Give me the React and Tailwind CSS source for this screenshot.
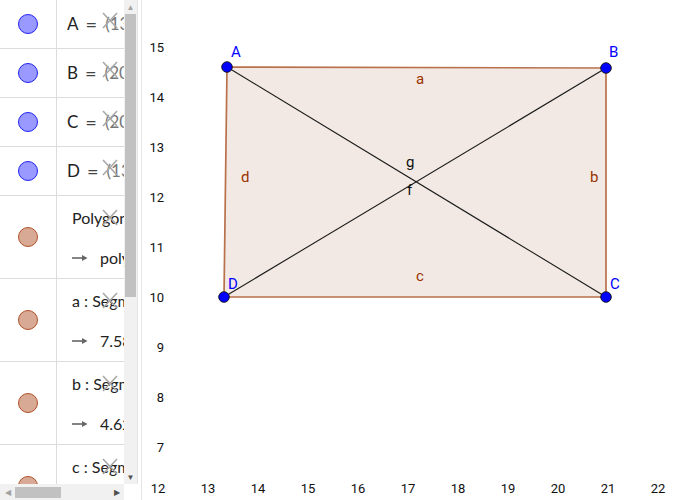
import React from "react";

// Algebra view entries: points first, then the polygon and its segments
const POINTS = [
  { name: "A", value: "(13.38, 14.62)" },
  { name: "B", value: "(20.96, 14.6)" },
  { name: "C", value: "(20.96, 10)" },
  { name: "D", value: "(13.32, 10)" },
];

const OBJECTS = [
  { head: "Polygon(A, B, C, D)", out: "poly1 = 34.95" },
  { head: "a : Segment(A, B)", out: "7.58" },
  { head: "b : Segment(B, C)", out: "4.62" },
  { head: "c : Segment(C, D)", out: "7.64" },
];

const A = [227, 67];
const B = [606, 68];
const C = [606, 297];
const D = [224, 297];

function Cross({ className }) {
  return (
    <svg className={className} width="16" height="17" viewBox="0 0 16 17">
      <path d="M1 1 L15 16 M15 1 L1 16" stroke="#a8a8a8" strokeWidth="1.6" />
    </svg>
  );
}

function Dot({ blue }) {
  return (
    <div
      className={
        blue
          ? "h-[20px] w-[20px] rounded-full border border-[#2222ee] bg-[#9999ff]"
          : "h-[20px] w-[20px] rounded-full border border-[#b0502a] bg-[#d8aa96]"
      }
    />
  );
}

function PointRow({ p }) {
  return (
    <div className="relative flex h-[49px] border-b border-[#dcdcdc]">
      <div className="flex w-[57px] shrink-0 items-center justify-center border-r border-[#dcdcdc]">
        <Dot blue />
      </div>
      <div className="flex items-center whitespace-nowrap pl-[10px] text-[17px] text-[#222]">
        {p.name}
        <span className="ml-[7px] text-[20px] leading-none text-[#444]">=</span>
        <span className="ml-[8px] text-[#777]">{p.value}</span>
      </div>
      <Cross className="absolute left-[102px] top-[12px]" />
    </div>
  );
}

function ObjectRow({ o }) {
  return (
    <div className="relative flex h-[83px] border-b border-[#dcdcdc]">
      <div className="flex w-[57px] shrink-0 items-center justify-center border-r border-[#dcdcdc]">
        <Dot />
      </div>
      <div className="flex flex-col justify-center gap-[16px] whitespace-nowrap pl-[15px] pt-[2px] text-[16px] text-[#222]">
        <div>{o.head}</div>
        <div className="flex items-center">
          <svg className="mr-[12px] shrink-0" width="16" height="8" viewBox="0 0 16 8">
            <path d="M0 4 H14" stroke="#666" strokeWidth="1.6" />
            <path d="M10 1 L15.5 4 L10 7 Z" fill="#666" />
          </svg>
          {o.out}
        </div>
      </div>
      <Cross className="absolute left-[102px] top-[13px]" />
    </div>
  );
}

function Graph() {
  const xs = [12, 13, 14, 15, 16, 17, 18, 19, 20, 21, 22];
  const ys = [15, 14, 13, 12, 11, 10, 9, 8, 7];
  const label = { fontFamily: "Roboto, 'Liberation Sans', sans-serif", fontSize: 15 };
  return (
    <svg className="block" width="554" height="500" viewBox="146 0 554 500">
      {ys.map((v) => (
        <text key={v} x="164" y={297 - (v - 10) * 50 + 5} textAnchor="end" fontFamily="Roboto, sans-serif" fontSize="13" fill="#111">
          {v}
        </text>
      ))}
      {xs.map((v) => (
        <text key={v} x={158 + (v - 12) * 50} y="493" textAnchor="middle" fontFamily="Roboto, sans-serif" fontSize="13" fill="#111">
          {v}
        </text>
      ))}

      <polygon
        points={[A, B, C, D].map((p) => p.join(",")).join(" ")}
        fill="#f2e9e4"
        stroke="#b9714c"
        strokeWidth="1.7"
      />
      <line x1={A[0]} y1={A[1]} x2={C[0]} y2={C[1]} stroke="#1a1a1a" strokeWidth="1.1" />
      <line x1={B[0]} y1={B[1]} x2={D[0]} y2={D[1]} stroke="#1a1a1a" strokeWidth="1.1" />

      {[A, B, C, D].map((p, i) => (
        <circle key={i} cx={p[0]} cy={p[1]} r="5.3" fill="#0000ff" stroke="#111" strokeWidth="0.9" />
      ))}

      <g style={label} fill="#0000ff">
        <text x="231" y="57">A</text>
        <text x="609" y="57">B</text>
        <text x="610" y="289">C</text>
        <text x="228" y="289">D</text>
      </g>
      <g style={label} fill="#993300">
        <text x="416" y="84">a</text>
        <text x="590" y="182">b</text>
        <text x="416" y="281">c</text>
        <text x="241" y="182">d</text>
      </g>
      <g style={label} fill="#111">
        <text x="406" y="167">g</text>
        <text x="407" y="195">f</text>
      </g>
    </svg>
  );
}

export default function App() {
  return (
    <div className="flex h-[500px] w-[700px] overflow-hidden bg-white font-['Lato','Noto_Sans',sans-serif]">
      {/* Algebra view */}
      <div className="flex w-[124px] shrink-0 flex-col">
        <div className="flex-1 overflow-hidden">
          {POINTS.map((p) => (
            <PointRow key={p.name} p={p} />
          ))}
          {OBJECTS.map((o) => (
            <ObjectRow key={o.head} o={o} />
          ))}
        </div>
        <div className="flex h-[16px] items-center bg-[#f1f1f1]">
          <span className="w-[15px] text-center text-[8px] leading-none text-[#a3a3a3]">◀</span>
          <div className="h-[11px] w-[46px] bg-[#c1c1c1]" />
          <div className="flex-1" />
          <span className="w-[14px] text-center text-[8px] leading-none text-[#505050]">▶</span>
        </div>
      </div>

      {/* Vertical scrollbar */}
      <div className="flex w-[14px] shrink-0 flex-col">
        <div className="flex h-[484px] flex-col items-center border-r border-[#e4e4e4] bg-[#f1f1f1]">
          <span className="h-[14px] text-[8px] leading-[14px] text-[#a3a3a3]">▲</span>
          <div className="h-[283px] w-[11px] bg-[#c1c1c1]" />
          <div className="flex-1" />
          <span className="h-[14px] text-[8px] leading-[14px] text-[#505050]">▼</span>
        </div>
      </div>

      {/* Splitter */}
      <div className="flex w-[8px] shrink-0">
        <div className="w-[3px]" />
        <div className="w-px bg-[#e6e6e6]" />
      </div>

      <Graph />
    </div>
  );
}
